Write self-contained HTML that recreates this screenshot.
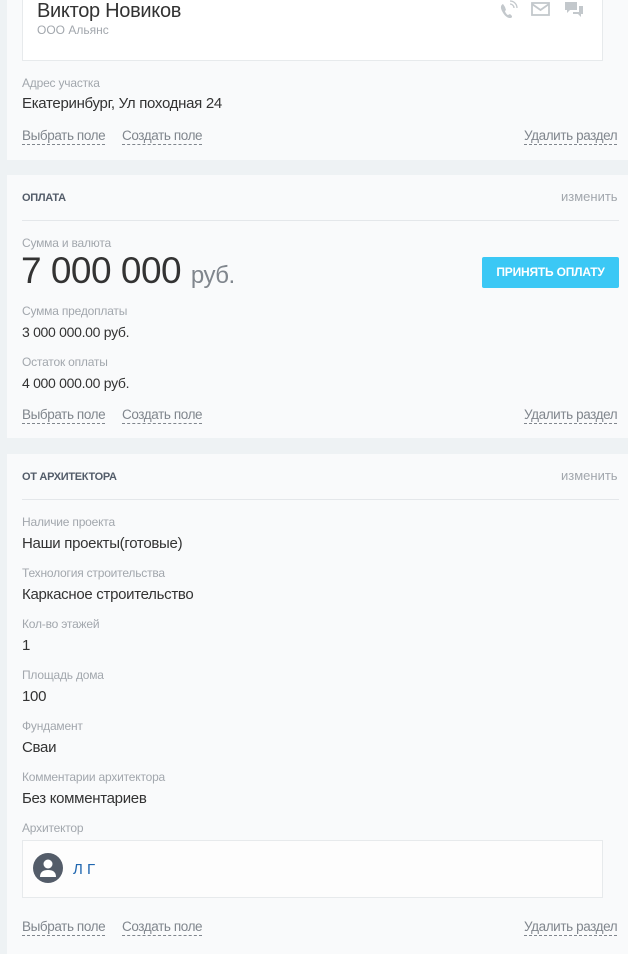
<!DOCTYPE html>
<html><head><meta charset="utf-8"><style>
body{margin:0;width:628px;height:946px;background:#eef2f4;position:relative;overflow:hidden;font-family:"Liberation Sans",Arial,sans-serif}
.card{position:absolute;left:7px;right:0;background:#f9fafb}
.t{position:absolute;white-space:nowrap;line-height:20px}
.l{font-size:12px;color:#a2a7ad;letter-spacing:-0.2px}
.v{font-size:15px;color:#333;letter-spacing:-0.3px}
.a{font-size:13.5px;color:#80868d;border-bottom:1px dashed #80868d;line-height:16px;letter-spacing:-0.4px}
.h{font-size:11px;font-weight:bold;color:#535c69;letter-spacing:-0.3px}
.e{font-size:13px;color:#a2a7ad}
.hr{position:absolute;left:22px;right:9px;height:1px;background:#e4e7ea}
.box{position:absolute;left:22px;right:25px;background:#fff;border:1px solid #e7eaec}
</style></head><body>
<div class="card" style="top:0;height:160px"></div>
<div class="box" style="top:-2px;height:61px"></div>
<div class="t" style="left:37px;top:0;font-size:20px;color:#333;line-height:22px;letter-spacing:-0.3px">Виктор Новиков</div>
<div class="t" style="left:37px;top:20px;font-size:12px;color:#a2a7ad">ООО Альянс</div>
<svg style="position:absolute;left:498px;top:0" width="90" height="24">
<path d="M5 4c-2 1-3 3-1 7s5 7 8 7c2 0 2-1 2-2l-2-2-2 1c-1 0-3-3-3-4l1-1-1-3z" fill="#c3c8cc"/>
<path d="M12 4a4 4 0 0 1 4 4M12 1a7 7 0 0 1 7 7" stroke="#c3c8cc" fill="none" stroke-width="1.3"/>
<rect x="34" y="3" width="17" height="12" fill="none" stroke="#c3c8cc" stroke-width="1.8"/><path d="M34 4l8.5 6 8.5-6" stroke="#c3c8cc" fill="none" stroke-width="1.8"/>
<path d="M67 2h12v8h-7l-3 3v-3h-2z" fill="#c3c8cc"/><path d="M81 6h4v8h-2v3l-3-3h-5v-2h6z" fill="#c3c8cc"/>
</svg>
<div class="t l" style="left:22px;top:73px">Адрес участка</div>
<div class="t v" style="left:22px;top:94px">Екатеринбург, Ул походная 24</div>
<div class="t a" style="left:22px;top:128px">Выбрать поле</div>
<div class="t a" style="left:122px;top:128px">Создать поле</div>
<div class="t a" style="left:524px;top:128px">Удалить раздел</div>

<div class="card" style="top:175px;height:263px"></div>
<div class="t h" style="left:22px;top:188px">ОПЛАТА</div>
<div class="t e" style="left:561px;top:187px">изменить</div>
<div class="hr" style="top:220px"></div>
<div class="t l" style="left:22px;top:233px">Сумма и валюта</div>
<div class="t" style="left:21px;top:251px;font-size:37px;line-height:40px;color:#333;letter-spacing:-0.5px">7 000 000 <span style="font-size:24px;color:#80868d">руб.</span></div>
<div style="position:absolute;left:482px;top:257px;width:137px;height:31px;background:#3bc8f5;border-radius:2px;color:#fff;font-size:12px;font-weight:bold;text-align:center;line-height:31px;letter-spacing:-0.2px">ПРИНЯТЬ ОПЛАТУ</div>
<div class="t l" style="left:22px;top:301px">Сумма предоплаты</div>
<div class="t v" style="left:22px;top:322px;font-size:14px">3 000 000.00 руб.</div>
<div class="t l" style="left:22px;top:352px">Остаток оплаты</div>
<div class="t v" style="left:22px;top:373px;font-size:14px">4 000 000.00 руб.</div>
<div class="t a" style="left:22px;top:407px">Выбрать поле</div>
<div class="t a" style="left:122px;top:407px">Создать поле</div>
<div class="t a" style="left:524px;top:407px">Удалить раздел</div>

<div class="card" style="top:454px;height:500px"></div>
<div class="t h" style="left:22px;top:467px">ОТ АРХИТЕКТОРА</div>
<div class="t e" style="left:561px;top:466px">изменить</div>
<div class="hr" style="top:499px"></div>
<div class="t l" style="left:22px;top:512px">Наличие проекта</div>
<div class="t v" style="left:22px;top:534px">Наши проекты(готовые)</div>
<div class="t l" style="left:22px;top:563px">Технология строительства</div>
<div class="t v" style="left:22px;top:585px">Каркасное строительство</div>
<div class="t l" style="left:22px;top:614px">Кол-во этажей</div>
<div class="t v" style="left:22px;top:636px">1</div>
<div class="t l" style="left:22px;top:665px">Площадь дома</div>
<div class="t v" style="left:22px;top:687px">100</div>
<div class="t l" style="left:22px;top:716px">Фундамент</div>
<div class="t v" style="left:22px;top:738px">Сваи</div>
<div class="t l" style="left:22px;top:767px">Комментарии архитектора</div>
<div class="t v" style="left:22px;top:789px">Без комментариев</div>
<div class="t l" style="left:22px;top:818px">Архитектор</div>
<div class="box" style="top:840px;height:56px;background:#fdfdfd"></div>
<svg style="position:absolute;left:33px;top:853px" width="30" height="30"><circle cx="15" cy="15" r="15" fill="#535c69"/><circle cx="15" cy="11" r="4.5" fill="#fff"/><path d="M7 24c0-5 3-7 8-7s8 2 8 7z" fill="#fff"/></svg>
<div class="t" style="left:73px;top:860px;font-size:15px;color:#2067b0">Л Г</div>
<div class="t a" style="left:22px;top:919px">Выбрать поле</div>
<div class="t a" style="left:122px;top:919px">Создать поле</div>
<div class="t a" style="left:524px;top:919px">Удалить раздел</div>
</body></html>
